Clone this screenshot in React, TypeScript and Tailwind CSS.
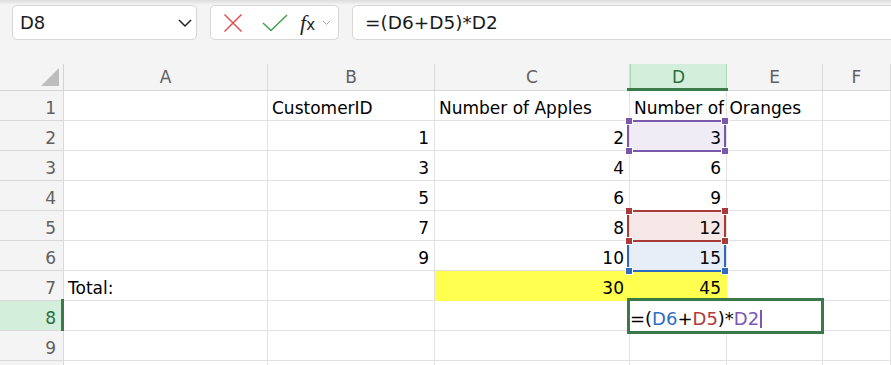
import React from "react";

type Cell = string | number | null;

const COLS = ["A", "B", "C", "D", "E", "F"];

const ROWS: Cell[][] = [
  [null, "CustomerID", "Number of Apples", "Number of Oranges", null, null],
  [null, 1, 2, 3, null, null],
  [null, 3, 4, 6, null, null],
  [null, 5, 6, 9, null, null],
  [null, 7, 8, 12, null, null],
  [null, 9, 10, 15, null, null],
  ["Total:", null, 30, 45, null, null],
  [null, null, null, null, null, null],
  [null, null, null, null, null, null],
  [null, null, null, null, null, null],
];

// formula reference ranges, keyed by row number (column D only)
const REFS: Record<number, { line: string; fill: string; handle: string; top: boolean; z: string }> = {
  2: { line: "border-[#7b58a9]", fill: "bg-[#efecf5]", handle: "bg-[#7b58a9]", top: true, z: "z-10" },
  5: { line: "border-[#a93b3b]", fill: "bg-[#f7e8e8]", handle: "bg-[#a93b3b]", top: true, z: "z-20" },
  6: { line: "border-[#2e6bbf]", fill: "bg-[#e8eef7]", handle: "bg-[#2e6bbf]", top: false, z: "z-10" },
};

function Handle({ color, pos }: { color: string; pos: string }) {
  return <div className={`absolute h-[8px] w-[8px] border border-white ${color} ${pos}`} />;
}

function RefBox({ row }: { row: number }) {
  const r = REFS[row];
  return (
    <>
      <div className={`absolute -left-[3px] -top-[1px] h-[32px] w-[99px] border-2 ${r.line} ${r.z}`} />
      {r.top && <Handle color={`${r.handle} ${r.z}`} pos="-left-[5px] -top-[4px]" />}
      {r.top && <Handle color={`${r.handle} ${r.z}`} pos="left-[91px] -top-[4px]" />}
      <Handle color={`${r.handle} ${r.z}`} pos="-left-[5px] top-[26px]" />
      <Handle color={`${r.handle} ${r.z}`} pos="left-[91px] top-[26px]" />
    </>
  );
}

function Toolbar() {
  return (
    <div className="relative flex h-[64px] gap-[13px] bg-[#f4f4f4] pl-[12px] pt-[5px]">
      <div className="absolute inset-x-0 top-0 h-[5px] bg-gradient-to-b from-[#dcdcdc] to-[#f4f4f4]" />
      <div className="relative flex h-[35px] w-[185px] shrink-0 items-center justify-between rounded-[5px] border border-[#d6d6d6] bg-white pl-[7px] pr-[3px] text-[18px] text-[#1b1b1b]">
        <span>D8</span>
        <svg width="16" height="10" viewBox="0 0 16 10">
          <path d="M2 2 L8 8 L14 2" fill="none" stroke="#222" strokeWidth="1.5" />
        </svg>
      </div>
      <div className="relative flex h-[35px] w-[129px] shrink-0 items-center rounded-[5px] border border-[#d6d6d6] bg-white pl-[12px]">
        <svg width="20" height="20" viewBox="0 0 20 20">
          <path d="M1.5 1.5 L18.5 18.5 M18.5 1.5 L1.5 18.5" stroke="#e0504f" strokeWidth="1.5" />
        </svg>
        <svg width="26" height="18" viewBox="0 0 26 18" className="ml-[19px]">
          <path d="M1 9 L9 16.5 L25 1" fill="none" stroke="#43a14d" strokeWidth="1.5" />
        </svg>
        <span className="ml-[12px] font-['Liberation_Serif'] text-[22px] italic leading-none text-[#222]">
          f<span className="not-italic font-['DejaVu_Sans'] text-[15px]">x</span>
        </span>
        <svg width="9" height="6" viewBox="0 0 9 6" className="ml-[7px] mt-[1px]">
          <path d="M1 1 L4.5 4.5 L8 1" fill="none" stroke="#a8a8a8" strokeWidth="1" />
        </svg>
      </div>
      <div className="relative flex h-[35px] w-[600px] shrink-0 items-center rounded-[5px] border border-[#d6d6d6] bg-white pl-[12px] text-[18.5px] text-[#1b1b1b]">
        =(D6+D5)*D2
      </div>
    </div>
  );
}

function ColumnHeader() {
  return (
    <>
      <div className="relative h-[27px] border-b border-r border-[#d4d4d4] bg-[#f4f4f4]">
        <svg width="19" height="19" viewBox="0 0 19 19" className="absolute left-[41px] top-[4px]">
          <polygon points="18,0 18,18 0,18" fill="#bdbdbd" />
        </svg>
      </div>
      {COLS.map((c) =>
        c === "D" ? (
          <div
            key={c}
            className="relative flex h-[27px] items-end justify-center border-x border-b border-[#a9d8b6] bg-[#d3eedb] pb-[3px] text-[17px] leading-[20px] text-[#2d6e3d]"
          >
            {c}
            <div className="absolute -bottom-[1px] -left-[4px] -right-[2px] h-[3px] bg-[#3a7b48]" />
          </div>
        ) : (
          <div
            key={c}
            className="flex h-[27px] items-end justify-center border-b border-r border-[#d9d9d9] bg-[#f4f4f4] pb-[3px] text-[17px] leading-[20px] text-[#616161]"
          >
            {c}
          </div>
        )
      )}
    </>
  );
}

function Row({ n, cells }: { n: number; cells: Cell[] }) {
  const active = n === 8;
  return (
    <>
      <div
        className={
          active
            ? "relative flex h-[30px] items-end justify-end border-b border-[#d9d9d9] bg-[#d3eedb] pb-[2px] pr-[8px] text-[17px] leading-[20px] text-[#2d6e3d]"
            : "flex h-[30px] items-end justify-end border-b border-r border-[#d9d9d9] bg-[#f4f4f4] pb-[2px] pr-[7px] text-[17px] leading-[20px] text-[#616161]"
        }
      >
        {n < 10 ? n : null}
        {active && <div className="absolute -top-[2px] -bottom-[1px] right-0 w-[3px] bg-[#3a7b48]" />}
      </div>
      {cells.map((v, i) => {
        const col = COLS[i];
        const yellow = n === 7 && (col === "C" || col === "D");
        const ref = col === "D" ? REFS[n] : undefined;
        const bg = yellow ? "bg-[#ffff4f] border-[#ffff4f]" : ref ? `${ref.fill} border-[#e1e1e1]` : "border-[#e1e1e1]";
        const align = typeof v === "number" ? "justify-end pr-[5px]" : "justify-start pl-[4px]";
        return (
          <div
            key={col}
            className={`relative flex h-[30px] items-end whitespace-nowrap border-b border-r pb-[2px] text-[17px] leading-[20px] text-black ${bg} ${align}`}
          >
            {v}
            {ref && <RefBox row={n} />}
            {active && col === "D" && (
              <div className="absolute -left-[3px] -top-[3px] z-30 flex h-[36px] w-[197px] items-end border-[3px] border-[#3b7a48] bg-white pb-[1px] text-[18px] leading-[22px] text-black">
                <span>=(</span>
                <span className="text-[#2f6fc0]">D6</span>
                <span>+</span>
                <span className="text-[#b03b3b]">D5</span>
                <span>)*</span>
                <span className="text-[#7e57b0]">D2</span>
                <span className="mb-[2px] ml-[1px] h-[18px] w-[2px] bg-[#7e57b0]" />
              </div>
            )}
          </div>
        );
      })}
    </>
  );
}

export default function App() {
  return (
    <div className="h-[365px] w-[891px] overflow-hidden bg-white font-['DejaVu_Sans',sans-serif]">
      <Toolbar />
      <div className="grid grid-cols-[64px_204px_167px_195px_97px_96px_1fr]">
        <ColumnHeader />
        {ROWS.map((cells, i) => (
          <Row key={i} n={i + 1} cells={cells} />
        ))}
      </div>
    </div>
  );
}
